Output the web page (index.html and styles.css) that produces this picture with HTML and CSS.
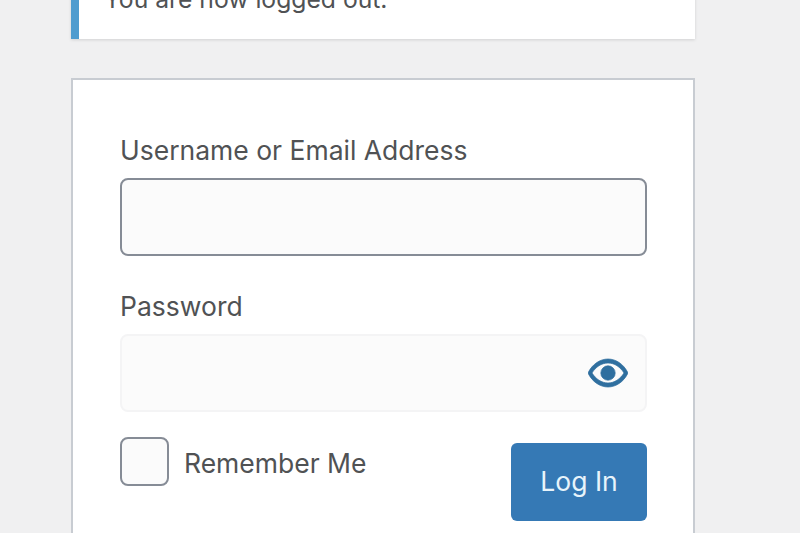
FILE: index.html
```html
<!DOCTYPE html>
<html>
<head>
	<meta charset="UTF-8">
	<meta name="viewport" content="width=device-width, initial-scale=1">
	<title>Log In</title>
	<link rel="stylesheet" href="styles.css">
</head>
<body>

	<div id="login">
		<p class="message">You are now logged out.</p>

		<form id="loginform">
			<div class="field">
				<label for="user_login">Username or Email Address</label>
				<input type="text" id="user_login" class="input input-active">
			</div>
			<div class="field">
				<label for="user_pass">Password</label>
				<div class="pass-wrap">
					<input type="text" id="user_pass" class="input">
					<span class="pass-toggle">
						<svg viewBox="0 0 20 20" width="40" height="40">
							<path d="M19.7 9.4C17.7 5.6 14 3 10 3S2.3 5.6.3 9.4L0 10l.3.6c2 3.8 5.7 6.4 9.7 6.4s7.7-2.6 9.7-6.4l.3-.6-.3-.6zM10 15c-3.2 0-6.2-2.1-8-5 1.8-3 4.8-5 8-5s6.2 2 8 5c-1.8 2.9-4.8 5-8 5z"/>
							<circle cx="10" cy="10" r="3.6"/>
						</svg>
					</span>
				</div>
			</div>
			<div class="actions">
				<label class="remember"><span class="checkbox"></span><span class="remember-text">Remember Me</span></label>
				<button type="button" class="submit">Log In</button>
			</div>
		</form>
	</div>

</body>
</html>
```

FILE: styles.css
```css
html, body {
	height: 100%;
}
body {
	margin: 0;
	padding: 0;
	overflow: hidden;
	background-color: #f0f0f1;
	font-family: 'Inter', 'Liberation Sans', sans-serif;
	color: #505254;
}
#login {
	width: 624px;
	margin: -29px 0 0 71px;
}

/* Logged out notice, scrolled partly off the top */
.message {
	margin: 0 0 39px 0;
	height: 68px;
	box-sizing: border-box;
	padding: 13px 0 0 25px;
	background-color: #fff;
	border-left: 8px solid #4f9ccf;
	box-shadow: 0 1px 3px rgba(0,0,0,0.13);
	font-size: 24.7px;
	line-height: 30px;
}

/* Form card */
#loginform {
	box-sizing: border-box;
	height: 600px;
	padding: 52px 46px 0 47px;
	background-color: #fff;
	border: 2px solid #c8ccd2;
}
.field {
	margin-bottom: 32px;
}
.field label {
	display: block;
	margin-bottom: 10px;
	font-size: 26.5px;
	line-height: 36px;
}
.input {
	display: block;
	width: 100%;
	height: 78px;
	box-sizing: border-box;
	padding: 0 16px;
	background-color: #fbfbfb;
	border: 2px solid #f4f4f5;
	border-radius: 8px;
	outline: none;
}
.input-active {
	border-color: #868c96;
}
.pass-wrap {
	position: relative;
}
.pass-toggle {
	position: absolute;
	top: 19px;
	right: 19px;
	height: 40px;
	fill: #2f6f9f;
	stroke: #2f6f9f;
	stroke-width: 0.35;
}

/* Remember me and submit */
.actions {
	display: flex;
	justify-content: space-between;
	align-items: flex-start;
	margin-top: -7px;
}
.remember {
	display: flex;
	align-items: center;
	gap: 15px;
	font-size: 26.5px;
}
.remember-text {
	margin-top: 2px;
}
.checkbox {
	width: 49px;
	height: 49px;
	box-sizing: border-box;
	background-color: #fbfbfb;
	border: 2px solid #868c96;
	border-radius: 8px;
}
.submit {
	width: 136px;
	height: 78px;
	margin-top: 6px;
	padding: 0 0 2px 0;
	background-color: #3579b5;
	border: none;
	border-radius: 6px;
	color: #e8f4fb;
	font-family: inherit;
	font-size: 26.5px;
}
```
